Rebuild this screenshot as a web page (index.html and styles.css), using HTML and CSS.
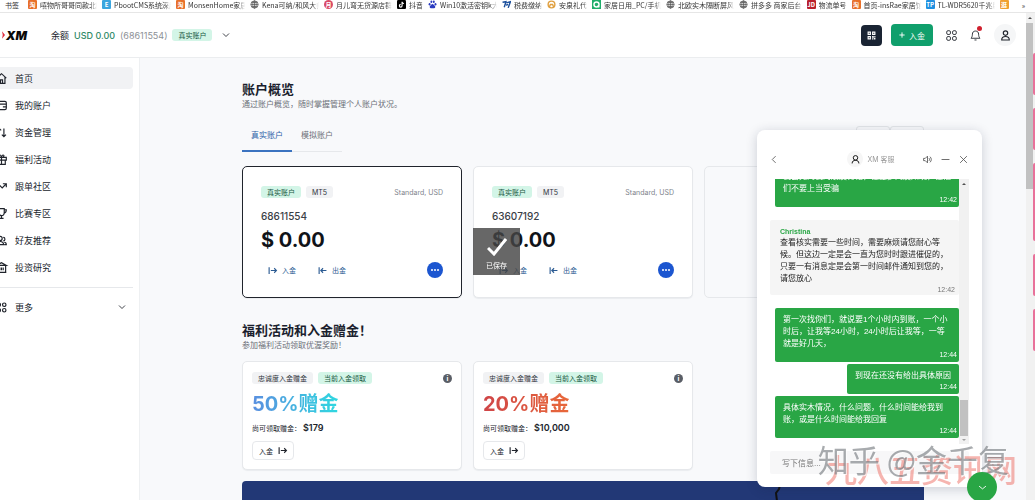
FILE: index.html
```
<!DOCTYPE html>
<html lang="zh-CN">
<head>
  <meta charset="UTF-8" />
  <meta name="viewport" content="width=device-width, initial-scale=1.0" />
  <title>XM 会员专区</title>
  <link rel="stylesheet" href="styles.css">
</head>
<body>
  <nav class="bookmarks" aria-label="书签">
    <span class="bookmarks-label">书签</span>
    <a class="bookmark" href="#"><i class="fav orange">淘</i><span>嘻物所哥哥同款北欧</span></a>
    <a class="bookmark" href="#"><i class="fav sky">E</i><span>PbootCMS系统深度</span></a>
    <a class="bookmark" href="#"><i class="fav orange">淘</i><span>MonsenHome家居</span></a>
    <a class="bookmark" href="#"><svg class="globe" viewBox="0 0 16 16"><circle cx="8" cy="8" r="6.5"/><path d="M1.5 8h13M8 1.5v13M3 4.5h10M3 11.5h10"/><ellipse cx="8" cy="8" rx="3.2" ry="6.5"/></svg><span>Kena可纳/和风大师</span></a>
    <a class="bookmark" href="#"><i class="fav rose">月</i><span>月儿弯无货源店群</span></a>
    <a class="bookmark" href="#"><svg class="tiktok" viewBox="0 0 16 16"><rect width="16" height="16" rx="2"/><path d="M9 3v7.2a2.4 2.4 0 1 1-2.4-2.4M9 3c.2 2 1.5 3.1 3.5 3.2"/></svg><span>抖音</span></a>
    <a class="bookmark" href="#"><svg class="paw" viewBox="0 0 16 16"><ellipse cx="2.8" cy="7.5" rx="1.7" ry="2.2"/><ellipse cx="6" cy="3.2" rx="1.7" ry="2.3"/><ellipse cx="10.3" cy="3.2" rx="1.7" ry="2.3"/><ellipse cx="13.3" cy="7.5" rx="1.7" ry="2.2"/><path d="M8 7c2 0 2.6 2 4 3.4 2 2 .6 4.8-1.6 4.4-1.7-.3-3.1-.3-4.8 0-2.2.4-3.6-2.4-1.6-4.4C5.4 9 6 7 8 7z"/></svg><span>Win10激活密钥k大全</span></a>
    <a class="bookmark" href="#"><svg class="tax" viewBox="0 0 16 16"><path d="M1 4l6-1-3 10M8 5l7-2-4 11M7 9l4-1"/></svg><span>税费缴纳</span></a>
    <a class="bookmark" href="#"><svg class="gift-fav" viewBox="0 0 16 16"><circle cx="8" cy="8" r="6"/><path d="M4 13l2-5h4l2 5"/></svg><span>安泉礼代</span></a>
    <a class="bookmark" href="#"><svg class="search-fav" viewBox="0 0 16 16"><rect width="16" height="16"/><circle cx="8" cy="8" r="4.5"/><path d="M10 10l3 3"/></svg><span>家居日用_PC/手机端</span></a>
    <a class="bookmark" href="#"><svg class="globe" viewBox="0 0 16 16"><circle cx="8" cy="8" r="6.5"/><path d="M1.5 8h13M8 1.5v13M3 4.5h10M3 11.5h10"/><ellipse cx="8" cy="8" rx="3.2" ry="6.5"/></svg><span>北欧实木隔断屏风</span></a>
    <a class="bookmark" href="#"><svg class="globe" viewBox="0 0 16 16"><circle cx="8" cy="8" r="6.5"/><path d="M1.5 8h13M8 1.5v13M3 4.5h10M3 11.5h10"/><ellipse cx="8" cy="8" rx="3.2" ry="6.5"/></svg><span>拼多多 商家后台</span></a>
    <a class="bookmark" href="#"><i class="fav red">JD</i><span>物流单号</span></a>
    <a class="bookmark" href="#"><i class="fav orange">淘</i><span>首页-insRae家居馆</span></a>
    <a class="bookmark" href="#"><i class="fav blue">TP</i><span>TL-WDR5620千兆版</span></a>
    <a class="bookmark" href="#"><i class="fav amber">逛</i></a>
    <span class="bookmarks-more">»</span>
  </nav>

  <div class="window">
    <div class="app">
      <header class="topbar">
        <a class="logo" href="#" aria-label="XM"><svg class="logo-mark" viewBox="0 0 4 10"><path d="M0 0l4 5-4 5 1-5z"/></svg>XM</a>
        <div class="balance">
          <span>余额</span>
          <strong>USD 0.00</strong>
          <span class="muted">(68611554)</span>
          <span class="tag green">真实账户</span>
        </div>
        <button class="icon-btn" aria-label="切换账户"><svg class="icon small" viewBox="0 0 16 16"><path d="M2 5l6 6 6-6"/></svg></button>
        <div class="topbar-actions">
          <button class="qr-btn" aria-label="二维码"><svg viewBox="0 0 16 16"><path d="M1 1h6v6H1zM9 1h6v6H9zM1 9h6v6H1zM9 9h3v3H9zM12 12h3v3h-3zM13 9h2v2h-2zM9 13h2v2H9z"/><path class="hole" d="M3 3h2v2H3zM11 3h2v2h-2zM3 11h2v2H3z"/></svg></button>
          <button class="deposit-btn"><svg class="icon tiny" viewBox="0 0 16 16"><path d="M8 1v14M1 8h14"/></svg>入金</button>
          <button class="icon-btn" aria-label="应用"><svg class="icon large" viewBox="0 0 16 16"><rect x="1" y="1" width="5.5" height="5.5" rx="2"/><rect x="9.5" y="1" width="5.5" height="5.5" rx="2"/><rect x="1" y="9.5" width="5.5" height="5.5" rx="2"/><rect x="9.5" y="9.5" width="5.5" height="5.5" rx="2"/></svg></button>
          <button class="icon-btn bell" aria-label="通知"><svg class="icon large" viewBox="0 0 16 16"><path d="M8 1.5c-3 0-4.5 2-4.5 4.5 0 3.5-1 4.5-2 6h13c-1-1.5-2-2.5-2-6 0-2.5-1.5-4.5-4.5-4.5zM6.500 14.5h3"/></svg><span class="dot"></span></button>
          <button class="avatar" aria-label="个人资料"><svg class="icon" viewBox="0 0 16 16"><circle cx="8" cy="4.5" r="3.2"/><path d="M2.5 14.5c0-3.5 2-5 5.5-5s5.5 1.5 5.5 5z"/></svg></button>
        </div>
      </header>

      <div class="layout">
        <aside class="sidebar">
          <nav>
            <a class="nav-item active" href="#"><svg class="icon" viewBox="0 0 16 16"><path d="M1 7.5L8 1l7 6.5M3 6v9h10V6M6.5 15v-5h3v5"/></svg>首页</a>
            <a class="nav-item" href="#"><svg class="icon" viewBox="0 0 16 16"><rect x="1" y="2" width="14" height="12" rx="2"/><path d="M1 6h14M10 10h5"/></svg>我的账户</a>
            <a class="nav-item" href="#"><svg class="icon" viewBox="0 0 16 16"><path d="M4.5 14V2M1.5 5l3-3 3 3M11.5 2v12M8.5 11l3 3 3-3"/></svg>资金管理</a>
            <a class="nav-item" href="#"><svg class="icon" viewBox="0 0 16 16"><path d="M1 5h14v4H1zM2.5 9h11v6h-11zM8 5v10M8 5C4 5 3.5 1 6 1.5 7.5 2 8 5 8 5zM8 5c4 0 4.5-4 2-3.5C8.500 2 8 5 8 5z"/></svg>福利活动</a>
            <a class="nav-item" href="#"><svg class="icon" viewBox="0 0 16 16"><path d="M1 12l5-5 3 3 6-6M10 4h5v5"/></svg>跟单社区</a>
            <a class="nav-item" href="#"><svg class="icon" viewBox="0 0 16 16"><path d="M4 1h8v5c0 3-1.5 5-4 5S4 9 4 6zM4 2.5H1C1 6 2 7 4.5 7.5M12 2.5h3c0 3.5-1 4.5-3.5 5M8 11v4M5 15h6"/></svg>比赛专区</a>
            <a class="nav-item" href="#"><svg class="icon" viewBox="0 0 16 16"><circle cx="6" cy="5" r="3"/><path d="M1 14c0-3 2-4.5 5-4.5S11 11 11 14zM10.5 3.5a2.5 2.5 0 0 1 0 5M12 10.5c2 0 3 1.5 3 3.5h-3"/></svg>好友推荐</a>
            <a class="nav-item" href="#"><svg class="icon" viewBox="0 0 16 16"><path d="M1 5l7-4 7 4zM2 5v10h12V5M1 15h14M5.5 8v4M8 8v4M10.5 8v4"/></svg>投资研究</a>
          </nav>
          <hr class="divider">
          <button class="nav-item more"><svg class="icon" viewBox="0 0 16 16"><circle cx="4" cy="4" r="2.5"/><circle cx="12" cy="4" r="2.5"/><circle cx="4" cy="12" r="2.5"/><circle cx="12" cy="12" r="2.5"/></svg>更多<svg class="icon small chevron" viewBox="0 0 16 16"><path d="M2 5l6 6 6-6"/></svg></button>
        </aside>

        <main class="content">
          <section class="overview">
            <h2>账户概览</h2>
            <p class="subtitle">通过账户概览，随时掌握管理个人账户状况。</p>
            <div class="tab-row">
              <div class="tabs" role="tablist">
                <button class="tab selected" role="tab">真实账户</button>
                <button class="tab" role="tab">模拟账户</button>
              </div>
              <div class="pager">
                <button aria-label="上一页"></button>
                <button aria-label="下一页"></button>
              </div>
            </div>

            <div class="cards">
              <article class="account selected">
                <div class="tag-row"><span class="tag green">真实账户</span><span class="tag">MT5</span><span class="kind">Standard, USD</span></div>
                <div class="number">68611554</div>
                <div class="amount">$ 0.00</div>
                <div class="account-actions">
                  <a href="#"><svg class="icon arrow" viewBox="0 0 16 16"><path d="M2 2v12M5 8h10M11 4l4 4-4 4"/></svg>入金</a>
                  <a href="#"><svg class="icon arrow" viewBox="0 0 16 16"><path d="M2 2v12M15 8H5M9 4L5 8l4 4"/></svg>出金</a>
                  <button class="more-btn" aria-label="更多操作"><i></i><i></i><i></i></button>
                </div>
              </article>
              <article class="account">
                <div class="tag-row"><span class="tag green">真实账户</span><span class="tag">MT5</span><span class="kind">Standard, USD</span></div>
                <div class="number">63607192</div>
                <div class="amount">$ 0.00</div>
                <div class="account-actions">
                  <a href="#"><svg class="icon arrow" viewBox="0 0 16 16"><path d="M2 2v12M5 8h10M11 4l4 4-4 4"/></svg>入金</a>
                  <a href="#"><svg class="icon arrow" viewBox="0 0 16 16"><path d="M2 2v12M15 8H5M9 4L5 8l4 4"/></svg>出金</a>
                  <button class="more-btn" aria-label="更多操作"><i></i><i></i><i></i></button>
                </div>
              </article>
              <article class="account empty"></article>
            </div>
          </section>

          <section class="bonuses">
            <h2>福利活动和入金赠金！</h2>
            <p class="subtitle">参加福利活动领取优渥奖励！</p>
            <div class="cards">
              <article class="bonus">
                <div class="tag-row"><span class="tag">忠诚度入金赠金</span><span class="tag green">当前入金领取</span><span class="info">i</span></div>
                <h3 class="blue-text">50%赠金</h3>
                <p>尚可领取赠金： <strong>$179</strong></p>
                <button class="outline-btn">入金<svg class="icon arrow" viewBox="0 0 16 16"><path d="M2 2v12M5 8h10M11 4l4 4-4 4"/></svg></button>
              </article>
              <article class="bonus">
                <div class="tag-row"><span class="tag">忠诚度入金赠金</span><span class="tag green">当前入金领取</span><span class="info">i</span></div>
                <h3 class="red-text">20%赠金</h3>
                <p>尚可领取赠金： <strong>$10,000</strong></p>
                <button class="outline-btn">入金<svg class="icon arrow" viewBox="0 0 16 16"><path d="M2 2v12M5 8h10M11 4l4 4-4 4"/></svg></button>
              </article>
            </div>
          </section>

          <div class="banner"><svg class="banner-art" viewBox="0 0 8 20"><path d="M7 0L5 8 2 12l1 8"/></svg></div>
        </main>
      </div>
    </div>
    <div class="page-scroll"><span class="arrow-up"></span><span class="thumb"></span></div>
    <div class="side-strip"><i></i><i></i><i class="tall"></i><i></i><i></i></div>
  </div>

  <div class="toast" role="status">
    <svg viewBox="0 0 20 18"><path d="M1 10l6 6L19 1"/></svg>
    <span>已保存</span>
  </div>

  <section class="chat" aria-label="XM 客服">
    <header class="chat-head">
      <button class="icon-btn" aria-label="返回"><svg class="icon thin" viewBox="0 0 16 16"><path d="M10 2L4 8l6 6"/></svg></button>
      <div class="agent">
        <span class="agent-pic"><svg class="icon" viewBox="0 0 16 16"><circle cx="8" cy="5" r="4"/><path d="M2 15c0-4 2.5-5.5 6-5.5s6 1.5 6 5.5"/></svg></span>
        XM 客服
      </div>
      <div class="chat-tools">
        <button class="icon-btn" aria-label="声音"><svg class="icon thin" viewBox="0 0 16 16"><path d="M1 6h3l4-4v12l-4-4H1zM10.5 5.5c1.5 1.5 1.5 3.5 0 5M12.5 3c3 3 3 7 0 10"/></svg></button>
        <button class="icon-btn" aria-label="最小化"><svg class="icon thin" viewBox="0 0 16 16"><path d="M1 8h14"/></svg></button>
        <button class="icon-btn" aria-label="关闭"><svg class="icon thin" viewBox="0 0 16 16"><path d="M2 2l12 12M14 2L2 14"/></svg></button>
      </div>
    </header>
    <div class="chat-body">
      <div class="messages">
        <div class="msg mine">我会先向我的朋友讨论，让更多网友知晓，让他们不要上当受骗<time>12:42</time></div>
        <div class="msg theirs"><b>Christina</b>查看核实需要一些时间，需要麻烦请您耐心等候。但这边一定是会一直为您时时跟进催促的，只要一有消息定是会第一时间邮件通知到您的，请您放心<time>12:42</time></div>
        <div class="msg mine">第一次找你们，就说要1个小时内到账，一个小时后，让我等24小时，24小时后让我等，一等就是好几天，<time>12:44</time></div>
        <div class="msg mine">到现在还没有给出具体原因<time>12:44</time></div>
        <div class="msg mine">具体实木情况，什么问题，什么时间能给我到账，或是什么时间能给我回复<time>12:44</time></div>
      </div>
      <div class="chat-scroll"><span class="arrow-up"></span><span class="thumb"></span><span class="arrow-down"></span></div>
    </div>
    <input class="chat-input" type="text" placeholder="写下信息..." aria-label="写下信息">
  </section>

  <div class="watermark red-mark">九八五资讯网</div>
  <div class="watermark grey-mark">知乎 @金千复</div>
  <button class="chat-toggle" aria-label="收起聊天"><svg class="icon" viewBox="0 0 16 16"><path d="M3 6l5 4 5-4"/></svg></button>
</body>
</html>
```

FILE: styles.css
```
* {
  box-sizing: border-box;
}

body {
  margin: 0;
  height: 100vh;
  display: flex;
  flex-direction: column;
  overflow: hidden;
  background: #fff;
  color: #20242c;
  font-family: Inter, "Noto Sans CJK SC", sans-serif;
  font-size: 9px;
}

a {
  color: inherit;
  text-decoration: none;
}

button {
  font: inherit;
  color: inherit;
  background: none;
  border: 0;
  padding: 0;
  cursor: pointer;
}

h2, h3, p {
  margin: 0;
}

.icon {
  width: 11px;
  height: 11px;
  flex: none;
  fill: none;
  stroke: currentColor;
  stroke-width: 1.7;
  overflow: visible;
}

.icon.small {
  width: 8px;
  height: 8px;
}

.icon.tiny {
  width: 6px;
  height: 6px;
  stroke-width: 2.5;
}

.icon.large {
  stroke-width: 1.3;
}

.icon.thin {
  width: 9px;
  height: 9px;
  stroke-width: 1.5;
}

.icon.arrow {
  width: 9px;
  height: 9px;
  stroke-width: 2;
}

.icon-btn {
  display: flex;
  position: relative;
}

/* bookmarks */
.bookmarks {
  display: flex;
  align-items: center;
  gap: 5px;
  flex: none;
  height: 13px;
  padding: 0 10px 3px 5px;
  overflow: hidden;
  border-bottom: 1px solid #e6e6e6;
  font-family: "Noto Sans CJK SC", sans-serif;
  font-size: 7px;
  line-height: 10px;
  color: #333;
  white-space: nowrap;
}

.bookmarks-label {
  margin-right: 4px;
}

.bookmarks-more {
  margin-left: auto;
}

.bookmark {
  display: flex;
  align-items: center;
  gap: 3px;
  flex: none;
  max-width: 69px;
}

.bookmark span {
  overflow: hidden;
  -webkit-mask-image: linear-gradient(90deg, #000 88%, transparent);
  mask-image: linear-gradient(90deg, #000 88%, transparent);
}

.bookmark svg {
  width: 9px;
  height: 9px;
  flex: none;
  fill: none;
}

.fav {
  width: 9px;
  height: 9px;
  flex: none;
  overflow: hidden;
  border-radius: 1px;
  color: #fff;
  font-size: 6px;
  font-style: normal;
  font-weight: 700;
  line-height: 9px;
  text-align: center;
}

.orange { background: #e8702a; }
.sky { background: #3aa5de; }
.rose { background: #d94a66; border-radius: 50%; }
.red { background: #b8202c; }
.blue { background: #2090e0; }
.amber { background: #f0a030; }

.globe { stroke: #555; stroke-width: 1.3; }
.tiktok rect { fill: #000; }
.tiktok path { stroke: #fff; stroke-width: 2; }
.paw ellipse, .paw path { fill: #2a3bc0; }
.tax { stroke: #1b4f9c; stroke-width: 2.5; }
.gift-fav { stroke: #e0a040; stroke-width: 2.5; }
.search-fav { stroke: #fff; stroke-width: 2.5; }
.search-fav rect { fill: #1fae6b; stroke: none; }

/* frame */
.window {
  flex: 1;
  min-height: 0;
  display: flex;
}

.app {
  flex: 1;
  min-width: 0;
  display: flex;
  flex-direction: column;
}

.page-scroll {
  width: 7px;
  background: #f1f1f1;
  display: flex;
  flex-direction: column;
  align-items: center;
}

.page-scroll .thumb {
  width: 7px;
  height: 34%;
  background: #c1c1c1;
}

.arrow-up {
  border: 2px solid transparent;
  border-bottom-color: #505050;
  border-top-width: 0;
  margin: 4px 0;
}

.arrow-down {
  border: 2px solid transparent;
  border-top-color: #a0a0a0;
  border-bottom-width: 0;
  margin: 3px 0;
}

.side-strip {
  width: 2px;
  padding-top: 40px;
  display: flex;
  flex-direction: column;
  gap: 13px;
  background: #f1f1f1;
}

.side-strip i {
  height: 42px;
  border-radius: 2px 0 0 2px;
  background: #e8719a;
}

.side-strip .tall {
  height: 78px;
}

/* top bar */
.topbar {
  display: flex;
  align-items: center;
  flex: none;
  height: 45px;
  padding: 0 10px 0 2px;
  border-bottom: 1px solid #ebedef;
}

.logo {
  display: flex;
  align-items: center;
  gap: 1px;
  width: 49px;
  font-size: 12px;
  font-weight: 900;
  font-style: italic;
  color: #0a0a0a;
}

.logo-mark {
  width: 3px;
  height: 8px;
  fill: #e02b3c;
}

.balance {
  display: flex;
  align-items: center;
  gap: 5px;
  margin-right: 10px;
}

.balance strong {
  color: #2f8a66;
  font-weight: 500;
}

.muted {
  color: #8c9096;
}

.tag {
  display: inline-flex;
  align-items: center;
  height: 12px;
  padding: 0 6px;
  border-radius: 3px;
  background: #f1f2f4;
  color: #30343c;
  font-size: 7px;
  white-space: nowrap;
}

.tag.green {
  background: #d3f5e7;
  color: #17583f;
}

.topbar-actions {
  display: flex;
  align-items: center;
  gap: 13px;
  margin-left: auto;
}

.qr-btn {
  width: 21px;
  height: 21px;
  border-radius: 4px;
  background: #1a2433;
  display: flex;
  align-items: center;
  justify-content: center;
  margin-right: -4px;
}

.qr-btn svg {
  width: 9px;
  height: 9px;
  fill: #fff;
}

.qr-btn .hole {
  fill: #1a2433;
}

.deposit-btn {
  height: 22px;
  padding: 0 8px;
  display: flex;
  align-items: center;
  gap: 4px;
  border-radius: 4px;
  background: #109f6c;
  color: #fff;
  font-size: 8px;
}

.dot {
  position: absolute;
  top: -4px;
  right: -1px;
  width: 5px;
  height: 5px;
  border-radius: 50%;
  background: #d0202e;
}

.avatar {
  width: 22px;
  height: 22px;
  border-radius: 50%;
  background: #f5f6f7;
  display: flex;
  align-items: center;
  justify-content: center;
}

/* sidebar */
.layout {
  flex: 1;
  min-height: 0;
  display: flex;
}

.sidebar {
  flex: none;
  width: 140px;
  padding: 9px 6px 0 0;
  border-right: 1px solid #eef0f2;
}

.sidebar nav {
  display: flex;
  flex-direction: column;
  gap: 5px;
}

.nav-item {
  display: flex;
  align-items: center;
  gap: 8px;
  height: 22px;
  border-radius: 0 4px 4px 0;
}

.nav-item .icon:first-child {
  margin-left: -4px;
}

.nav-item.active {
  background: #f1f2f4;
}

.nav-item.more {
  width: 100%;
}

.chevron {
  margin: 0 7px 0 auto;
}

.divider {
  margin: 9px 0 8px;
  border: 0;
  border-top: 1px solid #e6e8eb;
}

/* main column */
.content {
  flex: 1;
  min-width: 0;
  overflow: hidden;
  padding: 23px 102px 0;
  background: #f8f9fb;
}

h2 {
  font-size: 13px;
  line-height: 16px;
  font-weight: 700;
  color: #1b1f2e;
}

.subtitle {
  font-size: 8px;
  line-height: 14px;
  color: #6c7078;
}

.tab-row {
  display: flex;
  align-items: flex-end;
  justify-content: space-between;
  height: 41px;
}

.tabs {
  display: flex;
  border-bottom: 1px solid #e6e8eb;
}

.tab {
  height: 32px;
  padding: 0 9px 1px;
  margin-bottom: -1px;
  font-size: 8px;
  color: #6c7078;
  border-bottom: 2px solid transparent;
}

.tab.selected {
  color: #2c5fa8;
  border-bottom-color: #3b73c0;
}

.pager {
  display: flex;
  margin-bottom: 4px;
}

.pager button {
  width: 34px;
  height: 22px;
  border: 1px solid #e3e5e8;
  border-radius: 3px;
}

.cards {
  display: grid;
  grid-template-columns: repeat(3, 1fr);
  gap: 11px;
}

.overview .cards {
  margin-top: 14px;
}

.account,
.bonus {
  background: #fff;
  border: 1px solid #e6e8eb;
  border-radius: 5px;
  box-shadow: 0 1px 1px rgba(20, 30, 50, 0.06);
}

.account {
  padding: 19px 18px;
}

.account.selected {
  border-color: #20242c;
}

.account.empty {
  background: none;
  box-shadow: none;
}

.tag-row {
  display: flex;
  align-items: center;
  gap: 5px;
}

.kind {
  margin-left: auto;
  font-size: 7px;
  color: #80848c;
}

.number {
  margin-top: 10px;
  font-size: 10px;
  line-height: 16px;
  font-weight: 500;
  color: #3a3e46;
}

.amount {
  margin-top: 3px;
  font-size: 20px;
  line-height: 26px;
  font-weight: 700;
  color: #101318;
}

.account-actions {
  display: flex;
  align-items: center;
  gap: 22px;
  margin-top: 9px;
  padding-left: 7px;
  font-size: 7px;
  color: #2a5a92;
}

.account-actions a {
  display: flex;
  align-items: center;
  gap: 5px;
}

.more-btn {
  width: 16px;
  height: 16px;
  margin-left: auto;
  border-radius: 50%;
  background: #1c56d0;
  display: flex;
  align-items: center;
  justify-content: center;
  gap: 1px;
}

.more-btn i {
  width: 2px;
  height: 2px;
  border-radius: 50%;
  background: #fff;
}

.bonuses {
  margin-top: 24px;
}

.bonuses .cards {
  margin-top: 9px;
}

.bonus {
  padding: 10px 9px 9px;
}

.info {
  width: 9px;
  height: 9px;
  margin-left: auto;
  border-radius: 50%;
  background: #5a5e66;
  color: #fff;
  font-size: 7px;
  font-weight: 700;
  line-height: 9px;
  text-align: center;
}

.bonus h3 {
  width: max-content;
  margin-top: 7px;
  font-size: 20px;
  line-height: 26px;
  font-weight: 700;
  color: transparent;
  -webkit-background-clip: text;
  background-clip: text;
}

.blue-text {
  background-image: linear-gradient(90deg, #5b8fe0, #2fd8e0);
}

.red-text {
  background-image: linear-gradient(90deg, #cf4548, #e8683a);
}

.bonus p {
  margin-top: 4px;
  font-size: 7px;
  line-height: 14px;
}

.bonus strong {
  font-size: 9px;
  font-weight: 600;
}

.outline-btn {
  display: flex;
  align-items: center;
  gap: 5px;
  height: 19px;
  margin-top: 5px;
  padding: 0 6px;
  border: 1px solid #e6e8eb;
  border-radius: 4px;
  font-size: 7px;
}

.banner {
  height: 60px;
  margin-top: 11px;
  padding-left: 532px;
  border-radius: 4px 4px 0 0;
  background: #223876;
}

.banner-art {
  width: 8px;
  height: 20px;
  fill: none;
  stroke: #111;
  stroke-width: 2;
}

/* saved toast */
.toast {
  position: fixed;
  left: 473px;
  top: 228px;
  width: 47px;
  height: 47px;
  padding-top: 10px;
  display: flex;
  flex-direction: column;
  align-items: center;
  gap: 5px;
  background: rgba(70, 70, 70, 0.82);
  color: #fff;
  font-size: 7px;
  line-height: 10px;
}

.toast svg {
  width: 20px;
  height: 18px;
  fill: none;
  stroke: #fff;
  stroke-width: 3;
}

/* support chat */
.chat {
  position: fixed;
  right: 53px;
  bottom: 13px;
  width: 225px;
  height: 357px;
  padding: 0 13px 13px;
  display: flex;
  flex-direction: column;
  border-radius: 8px;
  background: #fff;
  box-shadow: 0 2px 12px rgba(20, 30, 60, 0.2);
}

.chat-head {
  display: flex;
  align-items: center;
  justify-content: space-between;
  height: 49px;
  padding: 9px 1px 0 0;
  color: #555;
}

.agent {
  display: flex;
  align-items: center;
  gap: 4px;
  margin-left: 40px;
  font-size: 7px;
  color: #9a9a9a;
}

.agent-pic {
  width: 16px;
  height: 16px;
  display: flex;
  align-items: center;
  justify-content: center;
  border-radius: 50%;
  background: #f6f6f6;
  color: #111;
}

.agent-pic .icon {
  width: 9px;
  height: 9px;
}

.chat-tools {
  display: flex;
  gap: 9px;
}

.chat-body {
  flex: 1;
  min-height: 0;
  display: flex;
}

.messages {
  flex: 1;
  display: flex;
  flex-direction: column;
  justify-content: flex-end;
  align-items: flex-end;
  gap: 2px;
  padding-bottom: 6px;
  overflow: hidden;
  font-family: "Liberation Sans", "Noto Sans CJK SC", sans-serif;
  font-size: 8px;
  line-height: 12px;
}

.msg {
  flex: none;
  max-width: 184px;
  padding: 6px 8px 2px;
  border-radius: 2px;
}

.msg.mine {
  background: #29a645;
  color: #fff;
}

.msg.theirs {
  max-width: none;
  width: 100%;
  margin: 11px 0;
  padding: 6px 8px 0 10px;
  background: #f5f5f5;
  color: #222;
}

.msg b {
  display: block;
  font-size: 7px;
  line-height: 11px;
  color: #29a645;
}

.msg time {
  display: block;
  margin-right: -6px;
  font-size: 7px;
  line-height: 10px;
  text-align: right;
}

.theirs time {
  margin-right: -4px;
  color: #777;
}

.chat-scroll {
  width: 10px;
  flex: none;
  display: flex;
  flex-direction: column;
  align-items: center;
  background: #f1f1f1;
}

.chat-scroll .thumb {
  width: 8px;
  height: 36px;
  margin-top: auto;
  background: #c1c1c1;
}

.chat-input {
  height: 23px;
  margin-top: 7px;
  padding: 0 12px;
  border: 0;
  border-radius: 2px;
  background: #f7f7f8;
  font: inherit;
  font-size: 8px;
}

.chat-input::placeholder {
  color: #777;
}

.chat-toggle {
  position: fixed;
  right: 38px;
  bottom: -2px;
  width: 30px;
  height: 30px;
  display: flex;
  align-items: center;
  justify-content: center;
  border-radius: 50%;
  background: #29a645;
  color: #fff;
}

.chat-toggle .icon {
  stroke-width: 1.3;
}

.watermark {
  position: fixed;
  white-space: nowrap;
  pointer-events: none;
  font-family: "Noto Sans CJK SC", sans-serif;
}

.red-mark {
  right: 18px;
  bottom: 14px;
  font-size: 32px;
  line-height: 36px;
  font-weight: 500;
  color: rgba(235, 90, 80, 0.45);
}

.grey-mark {
  right: 26px;
  bottom: 23px;
  font-size: 31px;
  line-height: 36px;
  color: rgba(110, 115, 120, 0.6);
  text-shadow: 1px 1px 0 rgba(255, 255, 255, 0.7);
}
```
